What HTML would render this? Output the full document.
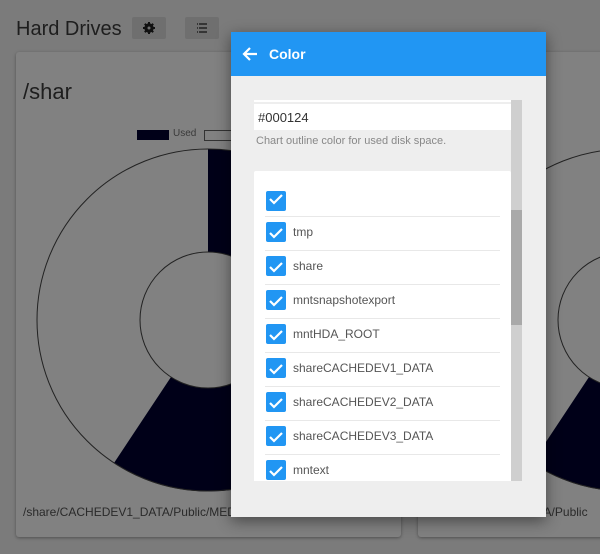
<!DOCTYPE html>
<html><head><style>
body{margin:0;width:600px;height:554px;overflow:hidden;background:#7b7b7b;font-family:"Liberation Sans",sans-serif;position:relative}
.abs{position:absolute}
.card{position:absolute;background:#818181;border-radius:3px;box-shadow:0 1px 3px rgba(0,0,0,.35)}
.btn{position:absolute;top:17px;width:34px;height:22px;background:#6f6f6f;border-radius:2px}
.row{position:absolute;left:11px;width:235px;height:34px;border-top:1px solid #e8e8e8}
.cb{position:absolute;left:1px;top:5px;width:20px;height:20px;background:#2196f3;border-radius:2px}
.row span{position:absolute;left:28px;top:8px;font-size:12px;color:#555}
</style></head><body>
<div class="abs" style="left:16px;top:18px;font-size:20px;color:#1e1e1e">Hard Drives</div>
<div class="btn" style="left:132px"><svg class="abs" style="left:11px;top:5px" width="12" height="12"><circle cx="6" cy="6" r="3.5" fill="none" stroke="#111" stroke-width="2.4"/><path d="M6 0v12M0 6h12M1.8 1.8l8.4 8.4M10.2 1.8l-8.4 8.4" stroke="#111" stroke-width="2"/><circle cx="6" cy="6" r="1.5" fill="#6f6f6f"/></svg></div>
<div class="btn" style="left:185px"><svg class="abs" style="left:12px;top:6px" width="10" height="10"><path d="M0 1h1M2 1h8M0 5h1M2 5h8M0 9h1M2 9h8" stroke="#222" stroke-width="1.4"/></svg></div>
<div class="card" style="left:16px;top:52px;width:385px;height:485px"></div>
<div class="card" style="left:418px;top:52px;width:200px;height:485px"></div>
<div class="abs" style="left:23px;top:79px;font-size:22px;color:#1e1e1e">/shar</div>
<div class="abs" style="left:137px;top:130px;width:32px;height:10px;background:#000018"></div>
<div class="abs" style="left:173px;top:128px;font-size:10px;color:#3a3a3a">Used</div>
<div class="abs" style="left:204px;top:130px;width:26px;height:9px;border:1px solid #333"></div>
<svg class="abs" style="left:0;top:0" width="600" height="554">
<g fill="#000018">
<path d="M208 149 A171 171 0 0 1 304 178 L246 263 A68 68 0 0 0 208 252Z"/>
<path d="M114 463 L171 377 A68 68 0 0 0 260 364 L340 430 A171 171 0 0 1 114 463Z"/>
<path d="M532 463 L589 377 A68 68 0 0 0 678 364 L758 430 A171 171 0 0 1 532 463Z"/>
</g>
<circle cx="208" cy="320" r="171" fill="none" stroke="#222" stroke-width="1"/>
<circle cx="208" cy="320" r="68" fill="none" stroke="#222" stroke-width="1"/>
<circle cx="626" cy="320" r="171" fill="none" stroke="#222" stroke-width="1"/>
<circle cx="626" cy="320" r="68" fill="none" stroke="#222" stroke-width="1"/>
</svg>
<div class="abs" style="left:23px;top:505px;font-size:12px;color:#2a2a2a">/share/CACHEDEV1_DATA/Public/MEDIA</div>
<div class="abs" style="left:530px;top:505px;font-size:12px;color:#2a2a2a">ATA/Public</div>
<div class="abs" style="left:231px;top:32px;width:315px;height:485px;background:#eeeeee;box-shadow:0 4px 14px rgba(0,0,0,.45)">
<div class="abs" style="left:0;top:0;width:315px;height:44px;background:#2196f3"></div>
<svg class="abs" style="left:11px;top:14px" width="16" height="16"><path d="M15 8H2M8 2L2 8l6 6" stroke="#fff" stroke-width="2.2" fill="none"/></svg>
<div class="abs" style="left:38px;top:14px;font-size:14px;font-weight:bold;color:#fff">Color</div>
<div class="abs" style="left:23px;top:68px;width:268px;height:381px;overflow:hidden">
<div class="abs" style="left:0;top:0;width:257px;height:2px;background:#fff"></div>
<div class="abs" style="left:0;top:4px;width:257px;height:26px;background:#fff"></div>
<div class="abs" style="left:4px;top:10px;font-size:13px;color:#333">#000124</div>
<div class="abs" style="left:2px;top:35px;font-size:11px;color:#888">Chart outline color for used disk space.</div>
<div class="abs" style="left:0;top:71px;width:257px;height:320px;background:#fff;border-radius:2px">
<div class="row" style="top:15px;border-top:none"><div class="cb"></div></div>
<div class="row" style="top:45px"><div class="cb"></div><span>tmp</span></div>
<div class="row" style="top:79px"><div class="cb"></div><span>share</span></div>
<div class="row" style="top:113px"><div class="cb"></div><span>mntsnapshotexport</span></div>
<div class="row" style="top:147px"><div class="cb"></div><span>mntHDA_ROOT</span></div>
<div class="row" style="top:181px"><div class="cb"></div><span>shareCACHEDEV1_DATA</span></div>
<div class="row" style="top:215px"><div class="cb"></div><span>shareCACHEDEV2_DATA</span></div>
<div class="row" style="top:249px"><div class="cb"></div><span>shareCACHEDEV3_DATA</span></div>
<div class="row" style="top:283px"><div class="cb"></div><span>mntext</span></div>
</div>
<div class="abs" style="left:257px;top:0;width:11px;height:381px;background:#cfcfcf"></div>
<div class="abs" style="left:257px;top:110px;width:11px;height:115px;background:#a9a9a9"></div>
</div>
</div>
<svg class="abs" style="left:0;top:0;pointer-events:none" width="600" height="554">
<g stroke="#fff" stroke-width="2.2" fill="none">
<path d="M270 199l4 4 8-8"/><path d="M270 233l4 4 8-8"/><path d="M270 267l4 4 8-8"/><path d="M270 301l4 4 8-8"/><path d="M270 335l4 4 8-8"/><path d="M270 369l4 4 8-8"/><path d="M270 403l4 4 8-8"/><path d="M270 437l4 4 8-8"/><path d="M270 471l4 4 8-8"/>
</g></svg>
</body></html>
